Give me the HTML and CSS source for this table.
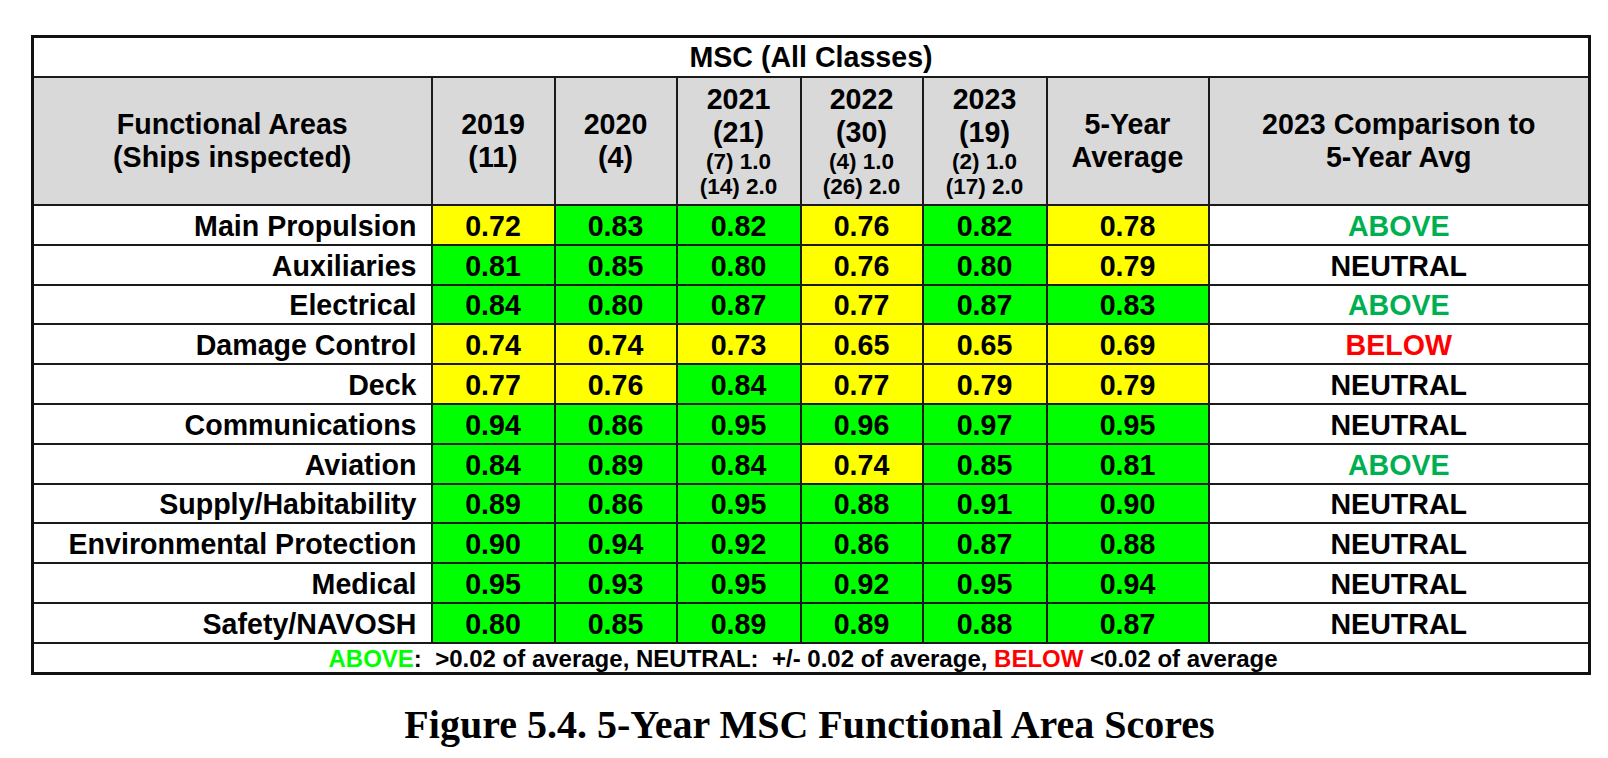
FILE: index.html
```html
<!DOCTYPE html>
<html>
<head>
<meta charset="utf-8">
<link rel="stylesheet" href="styles.css">
</head>
<body>
<div class="page">
<table class="scores">
<colgroup>
<col class="c-label"><col class="c-yr"><col class="c-yr2"><col class="c-yr3"><col class="c-yr2"><col class="c-yr3"><col class="c-avg"><col class="c-cmp">
</colgroup>
<tr class="title-row"><th colspan="8">MSC (All Classes)</th></tr>
<tr class="head">
<th>Functional Areas<br>(Ships inspected)</th>
<th>2019<br>(11)</th>
<th>2020<br>(4)</th>
<th>2021<br>(21)<span class="sub">(7) 1.0</span><span class="sub">(14) 2.0</span></th>
<th>2022<br>(30)<span class="sub">(4) 1.0</span><span class="sub">(26) 2.0</span></th>
<th>2023<br>(19)<span class="sub">(2) 1.0</span><span class="sub">(17) 2.0</span></th>
<th>5-Year<br>Average</th>
<th>2023 Comparison to<br>5-Year Avg</th>
</tr>
<tr class="data"><td class="label">Main Propulsion</td><td class="y">0.72</td><td class="g">0.83</td><td class="g">0.82</td><td class="y">0.76</td><td class="g">0.82</td><td class="y">0.78</td><td class="above">ABOVE</td></tr>
<tr class="data"><td class="label">Auxiliaries</td><td class="g">0.81</td><td class="g">0.85</td><td class="g">0.80</td><td class="y">0.76</td><td class="g">0.80</td><td class="y">0.79</td><td>NEUTRAL</td></tr>
<tr class="data"><td class="label">Electrical</td><td class="g">0.84</td><td class="g">0.80</td><td class="g">0.87</td><td class="y">0.77</td><td class="g">0.87</td><td class="g">0.83</td><td class="above">ABOVE</td></tr>
<tr class="data"><td class="label">Damage Control</td><td class="y">0.74</td><td class="y">0.74</td><td class="y">0.73</td><td class="y">0.65</td><td class="y">0.65</td><td class="y">0.69</td><td class="below">BELOW</td></tr>
<tr class="data"><td class="label">Deck</td><td class="y">0.77</td><td class="y">0.76</td><td class="g">0.84</td><td class="y">0.77</td><td class="y">0.79</td><td class="y">0.79</td><td>NEUTRAL</td></tr>
<tr class="data"><td class="label">Communications</td><td class="g">0.94</td><td class="g">0.86</td><td class="g">0.95</td><td class="g">0.96</td><td class="g">0.97</td><td class="g">0.95</td><td>NEUTRAL</td></tr>
<tr class="data"><td class="label">Aviation</td><td class="g">0.84</td><td class="g">0.89</td><td class="g">0.84</td><td class="y">0.74</td><td class="g">0.85</td><td class="g">0.81</td><td class="above">ABOVE</td></tr>
<tr class="data"><td class="label">Supply/Habitability</td><td class="g">0.89</td><td class="g">0.86</td><td class="g">0.95</td><td class="g">0.88</td><td class="g">0.91</td><td class="g">0.90</td><td>NEUTRAL</td></tr>
<tr class="data"><td class="label">Environmental Protection</td><td class="g">0.90</td><td class="g">0.94</td><td class="g">0.92</td><td class="g">0.86</td><td class="g">0.87</td><td class="g">0.88</td><td>NEUTRAL</td></tr>
<tr class="data"><td class="label">Medical</td><td class="g">0.95</td><td class="g">0.93</td><td class="g">0.95</td><td class="g">0.92</td><td class="g">0.95</td><td class="g">0.94</td><td>NEUTRAL</td></tr>
<tr class="data"><td class="label">Safety/NAVOSH</td><td class="g">0.80</td><td class="g">0.85</td><td class="g">0.89</td><td class="g">0.89</td><td class="g">0.88</td><td class="g">0.87</td><td>NEUTRAL</td></tr>
<tr class="legend"><td colspan="8"><span class="la">ABOVE</span>:  &gt;0.02 of average, NEUTRAL:  +/- 0.02 of average, <span class="lb">BELOW</span> &lt;0.02 of average</td></tr>
</table>
<div class="caption">Figure 5.4. 5-Year MSC Functional Area Scores</div>
</div>
</body>
</html>
```
FILE: styles.css
```css
html, body {
  margin: 0;
  padding: 0;
  background: #ffffff;
}
body {
  font-family: "Liberation Sans", Arial, sans-serif;
  color: #000000;
}
.page {
  padding: 35px 0 0 31px;
}
.scores {
  border-collapse: collapse;
  table-layout: fixed;
  width: 1557px;
  border: 3px solid #111111;
}
.c-label { width: 399px; }
.c-yr { width: 123px; }
.c-yr2 { width: 122px; }
.c-yr3 { width: 124px; }
.c-avg { width: 162px; }
.c-cmp { width: 381px; }
.scores th,
.scores td {
  border: 2px solid #1a1a1a;
  padding: 0;
  font-weight: bold;
  font-size: 28.6px;
  text-align: center;
  vertical-align: middle;
}
.title-row th {
  height: 38px;
  background: #ffffff;
  line-height: 34px;
}
.head th {
  background: #d9d9d9;
  height: 126px;
  line-height: 33px;
}
.sub {
  display: block;
  font-size: 22.5px;
  line-height: 25px;
}
.data td {
  height: 35.8px;
  padding-top: 2px;
  line-height: 32px;
  background: #ffffff;
}
.data td.label {
  text-align: right;
  padding-right: 14px;
}
.data td.g { background: #00ff00; }
.data td.y { background: #ffff00; }
.data td.above { color: #00b050; }
.data td.below { color: #ff0000; }
.legend td {
  height: 26px;
  padding: 2px 16px 0 0;
  font-size: 24px;
  line-height: 26px;
  white-space: pre;
  background: #ffffff;
}
.la { color: #00ff00; }
.lb { color: #ff0000; }
.caption {
  width: 1557px;
  margin-top: 27px;
  font-family: "Liberation Serif", "Times New Roman", serif;
  font-weight: bold;
  font-size: 40px;
  line-height: 46px;
  text-align: center;
}
```
